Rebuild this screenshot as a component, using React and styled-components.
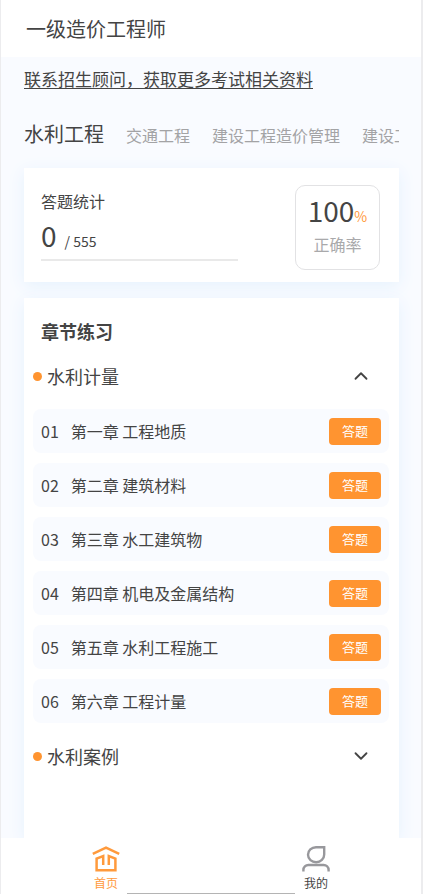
import React, { useState } from "react";
import styled, { createGlobalStyle } from "styled-components";
import { ChevronDown, ChevronUp } from "lucide-react";

const subjects = ["水利工程", "交通工程", "建设工程造价管理", "建设工程计价"];

const sections = [
  {
    name: "水利计量",
    chapters: [
      "第一章 工程地质",
      "第二章 建筑材料",
      "第三章 水工建筑物",
      "第四章 机电及金属结构",
      "第五章 水利工程施工",
      "第六章 工程计量",
    ],
  },
  { name: "水利案例", chapters: [] },
];

const HomeIcon = () => (
  <svg width="28" height="28" viewBox="0 0 28 28" fill="none" stroke="currentColor" strokeWidth="2.5">
    <path d="M0.8 8.8 L14 2.6 L27.2 8.8" />
    <path d="M11.2 20 V11 L4.6 13.6 V25.2 H23.4 V13.6 L16.8 11 V20" />
  </svg>
);

const UserIcon = () => (
  <svg width="28" height="28" viewBox="0 0 28 28" fill="none" stroke="currentColor" strokeWidth="2.4">
    <path d="M14 2.2 H22.2 V9.6 A8.1 7.5 0 1 1 14 2.2 Z" />
    <path d="M1.4 26.4 V25 A5 5 0 0 1 6.4 20 H21.6 A5 5 0 0 1 26.6 25 V26.4" />
  </svg>
);

const App = () => {
  const [subject, setSubject] = useState(0);
  const [opened, setOpened] = useState("水利计量");

  return (
    <>
      <GlobalStyle />
      <Page>
        <Header>
          <h1>一级造价工程师</h1>
        </Header>
        <Main>
          <Advisor href="#advisor">联系招生顾问，获取更多考试相关资料</Advisor>
          <Tabs>
            {subjects.map((name, i) => (
              <Tab key={name} $active={i === subject} onClick={() => setSubject(i)}>
                {name}
              </Tab>
            ))}
          </Tabs>
          <Stats>
            <Progress>
              <h2>答题统计</h2>
              <Count>
                <strong>0</strong>
                <span>/ 555</span>
              </Count>
              <Track />
            </Progress>
            <Rate>
              <p>
                100<small>%</small>
              </p>
              <span>正确率</span>
            </Rate>
          </Stats>
          <Practice>
            <h2>章节练习</h2>
            {sections.map(({ name, chapters }) => {
              const open = opened === name;
              return (
                <section key={name}>
                  <SectionButton aria-expanded={open} onClick={() => setOpened(open ? "" : name)}>
                    <Dot />
                    <span>{name}</span>
                    {open ? <ChevronUp size={22} /> : <ChevronDown size={22} />}
                  </SectionButton>
                  {open && (
                    <Chapters>
                      {chapters.map((title, i) => (
                        <Chapter key={title}>
                          <span>0{i + 1}</span>
                          <p>{title}</p>
                          <AnswerButton>答题</AnswerButton>
                        </Chapter>
                      ))}
                    </Chapters>
                  )}
                </section>
              );
            })}
          </Practice>
        </Main>
        <BottomNav>
          <NavItem href="#home" $active>
            <HomeIcon />
            首页
          </NavItem>
          <NavItem href="#mine">
            <UserIcon />
            <span>我的</span>
          </NavItem>
          <HomeIndicator />
        </BottomNav>
      </Page>
    </>
  );
};

export default App;

const GlobalStyle = createGlobalStyle`
  * {
    box-sizing: border-box;
  }

  body {
    margin: 0;
    color: #444;
    font-family: "Noto Sans CJK SC", "Noto Sans", sans-serif;
  }

  h1, h2, p, ul {
    margin: 0;
    padding: 0;
    font-weight: 400;
  }

  button {
    border: none;
    padding: 0;
    background: none;
    color: inherit;
    font-family: inherit;
    cursor: pointer;
  }
`;

const Page = styled.div`
  height: 100vh;
  display: flex;
  flex-direction: column;
  background-color: #f9fbff;
  border: solid #ececee;
  border-width: 0 2px 0 1px;
`;

const Header = styled.header`
  padding: 14px 25px;
  background-color: #fff;
  h1 {
    font-size: 20px;
    line-height: 29px;
  }
`;

const Main = styled.main`
  flex: 1;
  min-height: 0;
  overflow: hidden;
  display: flex;
  flex-direction: column;
  padding: 10px 22px 0 23px;
`;

const Advisor = styled.a`
  align-self: flex-start;
  color: #444;
  font-size: 17px;
  line-height: 24px;
  text-underline-offset: 2px;
`;

const Tabs = styled.nav`
  display: flex;
  align-items: baseline;
  gap: 22px;
  flex-shrink: 0;
  margin: 27px 0 17px;
  overflow: hidden;
`;

const Tab = styled.button`
  flex-shrink: 0;
  font-size: ${({ $active }) => ($active ? "20px" : "16px")};
  line-height: 32px;
  color: ${({ $active }) => ($active ? "#444" : "#a3a3a5")};
`;

const Card = styled.div`
  background-color: #fff;
  box-shadow: 0 4px 16px #e6f2fd;
`;

const Stats = styled(Card)`
  display: flex;
  flex-shrink: 0;
  justify-content: space-between;
  padding: 17px 19px 12px 17px;
`;

const Progress = styled.div`
  width: 58%;
  h2 {
    font-size: 16px;
    line-height: 32px;
  }
`;

const Count = styled.p`
  display: flex;
  align-items: baseline;
  gap: 8px;
  line-height: 36px;
  strong {
    font-size: 28px;
    font-weight: 400;
  }
  span {
    font-size: 14px;
  }
`;

const Track = styled.div`
  height: 2px;
  background-color: #e9e9e9;
`;

const Rate = styled.div`
  width: 85px;
  height: 85px;
  padding-top: 8px;
  border: 1px solid #e2e2e4;
  border-radius: 10px;
  text-align: center;
  p {
    font-size: 28px;
    line-height: 32px;
  }
  small {
    font-size: 14px;
    color: #ff9a3c;
  }
  span {
    display: block;
    font-size: 16px;
    line-height: 24px;
    color: #a9a9ab;
  }
`;

const Practice = styled(Card)`
  flex: 1 0 auto;
  margin-top: 16px;
  padding: 19px 10px 0 9px;
  h2 {
    padding-left: 8px;
    font-size: 18px;
    font-weight: 700;
    line-height: 28px;
  }
`;

const SectionButton = styled.button`
  display: flex;
  align-items: center;
  width: 100%;
  height: 62px;
  padding-right: 17px;
  font-size: 18px;
  line-height: 26px;
  text-align: left;
  span {
    flex: 1;
  }
`;

const Dot = styled.i`
  width: 9px;
  height: 9px;
  margin-right: 5px;
  border-radius: 50%;
  background-color: #ff9430;
`;

const Chapters = styled.ul`
  display: flex;
  flex-direction: column;
  gap: 10px;
  padding: 2px 0;
  list-style: none;
`;

const Chapter = styled.li`
  display: flex;
  align-items: center;
  gap: 12px;
  height: 44px;
  padding: 0 8px;
  border-radius: 8px;
  background-color: #f9fbff;
  font-size: 16px;
  p {
    flex: 1;
  }
`;

const AnswerButton = styled.button`
  width: 52px;
  height: 27px;
  padding-bottom: 2px;
  border-radius: 4px;
  background-color: #ff9430;
  color: #fff;
  font-size: 13px;
`;

const BottomNav = styled.nav`
  position: relative;
  display: flex;
  height: 56px;
  background-color: #fff;
`;

const NavItem = styled.a`
  flex: 1;
  display: flex;
  flex-direction: column;
  align-items: center;
  padding-top: 7px;
  font-size: 12px;
  line-height: 20px;
  text-decoration: none;
  color: ${({ $active }) => ($active ? "#ff9a3c" : "#98989c")};
  span {
    color: #444;
  }
`;

const HomeIndicator = styled.div`
  position: absolute;
  bottom: 0;
  left: 30%;
  width: 40%;
  height: 1px;
  background-color: #b4b4b4;
`;
